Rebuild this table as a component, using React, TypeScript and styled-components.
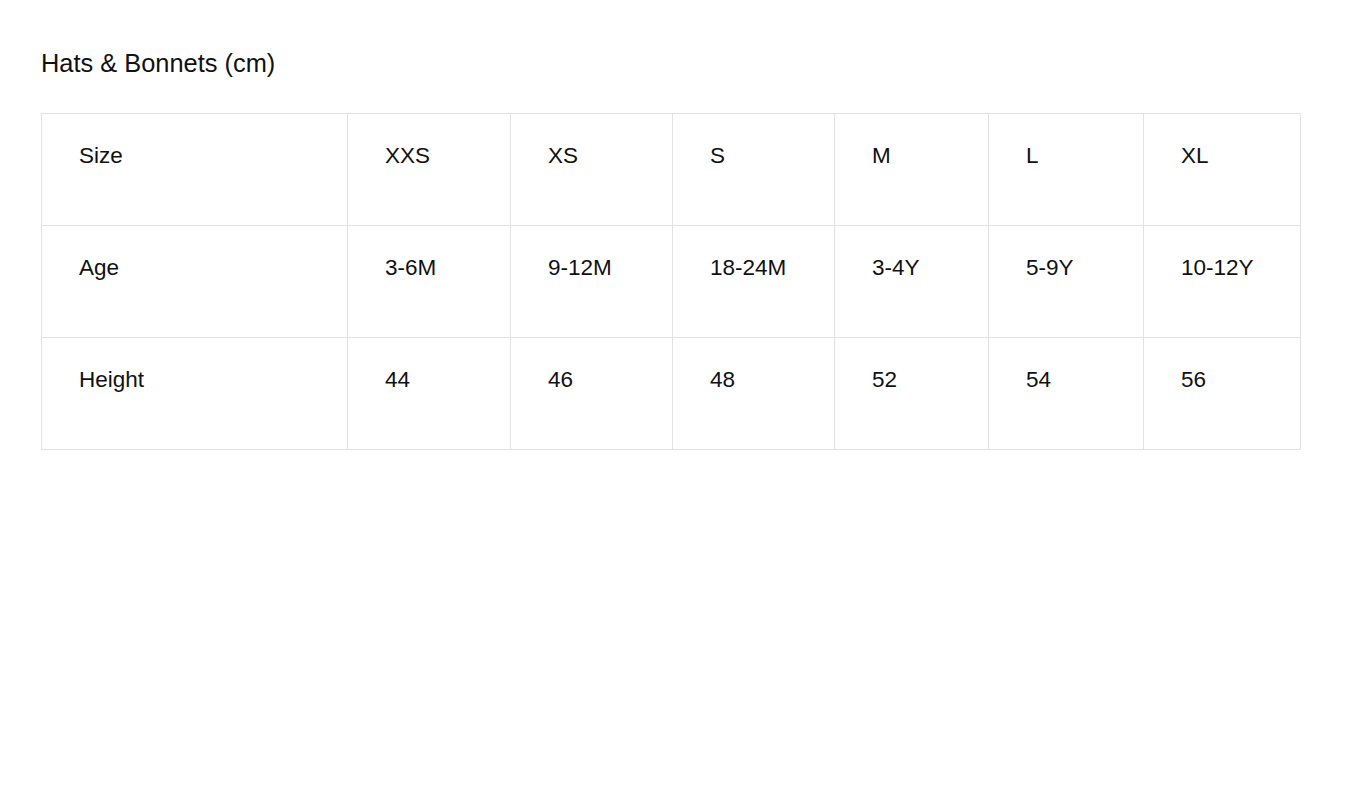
import React from 'react';
import { createGlobalStyle, styled } from 'styled-components';

const GlobalStyle = createGlobalStyle`
  html, body {
    margin: 0;
    padding: 0;
    background: #ffffff;
    font-family: "Liberation Sans", Arial, sans-serif;
    color: #111111;
  }
`;

const Page = styled.div`
  padding: 49px 0 0 41px;
`;

const Title = styled.h2`
  margin: 0 0 35px 0;
  font-size: 25.4px;
  font-weight: 400;
  line-height: normal;
  color: #111111;
`;

const Table = styled.table`
  border-collapse: collapse;
  table-layout: fixed;
  width: 1260px;
`;

const Cell = styled.td`
  height: 112px;
  box-sizing: border-box;
  padding: 29px 0 0 37px;
  vertical-align: top;
  border: 1px solid #e2e2e2;
  font-size: 22.5px;
  line-height: normal;
  color: #111111;
  white-space: nowrap;
`;

const widths = [306, 163, 162, 162, 154, 155, 157];

const rows: string[][] = [
  ['Size', 'XXS', 'XS', 'S', 'M', 'L', 'XL'],
  ['Age', '3-6M', '9-12M', '18-24M', '3-4Y', '5-9Y', '10-12Y'],
  ['Height', '44', '46', '48', '52', '54', '56'],
];

export default function App() {
  return (
    <Page>
      <GlobalStyle />
      <Title>Hats &amp; Bonnets (cm)</Title>
      <Table>
        <colgroup>
          {widths.map((w, i) => (
            <col key={i} style={{ width: w }} />
          ))}
        </colgroup>
        <tbody>
          {rows.map((row) => (
            <tr key={row[0]}>
              {row.map((cell, i) => (
                <Cell key={i}>{cell}</Cell>
              ))}
            </tr>
          ))}
        </tbody>
      </Table>
    </Page>
  );
}
